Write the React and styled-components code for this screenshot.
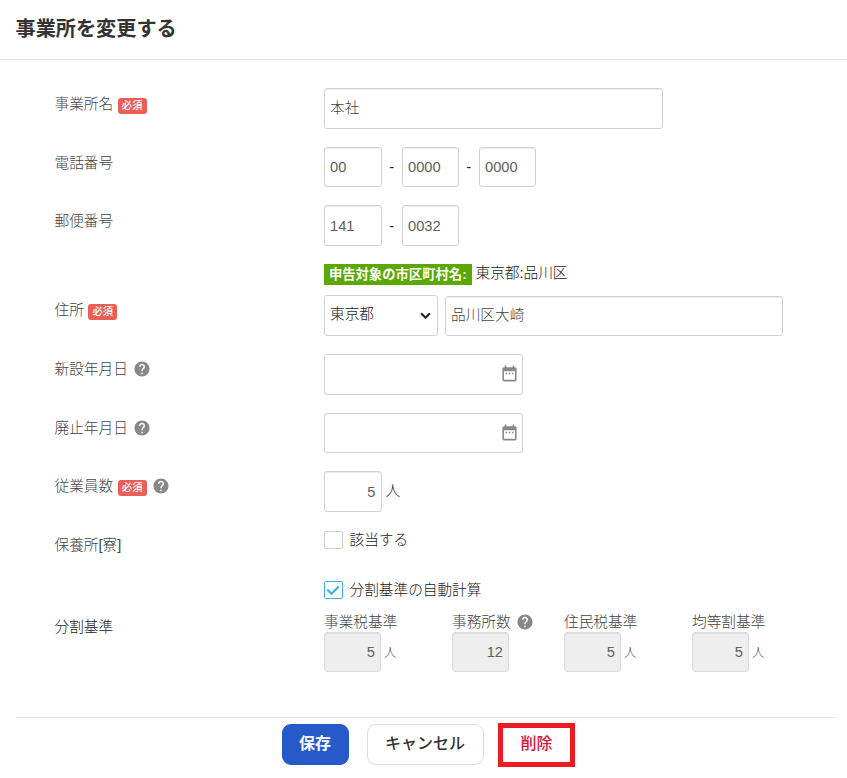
import React from 'react';
import styled, { createGlobalStyle } from 'styled-components';
import { MdHelp, MdDateRange } from 'react-icons/md';

const offices = [
  { label: '事業税基準', value: '5', unit: '人', width: 128 },
  { label: '事務所数', value: '12', help: true, width: 112 },
  { label: '住民税基準', value: '5', unit: '人', width: 128 },
  { label: '均等割基準', value: '5', unit: '人', width: 90 },
];

const Field = ({ label, required, help, height, offset = 0, dark, children }) => (
  <Row $height={height}>
    <Label $offset={offset} $dark={dark}>
      <LabelText>{label}</LabelText>
      {required && <Badge>必須</Badge>}
      {help && <HelpIcon />}
    </Label>
    <Content>{children}</Content>
  </Row>
);

const DateField = ({ height }) => (
  <DateBox>
    <DateInput $width={198.5} $height={height} />
    <CalendarIcon />
  </DateBox>
);

const App = () => {
  return (
    <>
      <GlobalStyle />
      <Page>
        <Header>
          <Title>事業所を変更する</Title>
        </Header>

        <Form>
          <Field label="事業所名" required height={59} offset={1}>
            <Input $width={338.5} $height={41} $text defaultValue="本社" />
          </Field>
          <Field label="電話番号" height={58} offset={1}>
            <Line>
              <Input $width={57.5} defaultValue="00" />
              <Dash>-</Dash>
              <Input $width={56.5} defaultValue="0000" />
              <Dash>-</Dash>
              <Input $width={56.5} defaultValue="0000" />
            </Line>
          </Field>
          <Field label="郵便番号" height={59} offset={1}>
            <Line>
              <Input $width={57.5} $height={41} defaultValue="141" />
              <Dash>-</Dash>
              <Input $width={56.5} $height={41} defaultValue="0032" />
            </Line>
          </Field>
          <Field label="住所" required height={90} offset={31}>
            <CityLine>
              <CityTag>申告対象の市区町村名:</CityTag>
              <span>東京都:品川区</span>
            </CityLine>
            <Line>
              <SelectBox>
                <Select defaultValue="東京都">
                  <option>東京都</option>
                </Select>
                <Chevron viewBox="0 0 10 6">
                  <path d="M1 1l4 4 4-4" fill="none" stroke="currentColor" strokeWidth="1.9" />
                </Chevron>
              </SelectBox>
              <Input $width={337.5} $height={40} $text defaultValue="品川区大崎" />
            </Line>
          </Field>
          <Field label="新設年月日" help height={59}>
            <DateField height={41} />
          </Field>
          <Field label="廃止年月日" help height={58}>
            <DateField height={40} />
          </Field>
          <Field label="従業員数" required help height={60}>
            <Line>
              <Input $width={57.5} $height={41} $right defaultValue="5" />
              <Unit $large>人</Unit>
            </Line>
          </Field>
          <Field label="保養所[寮]" height={50} offset={-1}>
            <CheckLabel>
              <CheckBox />
              <CheckText>該当する</CheckText>
            </CheckLabel>
          </Field>
          <Field label="分割基準" height={136} offset={31} dark>
            <CheckLabel>
              <CheckBox $checked>
                <svg width="14" height="12" viewBox="0 0 14 12">
                  <path d="M1.3 5.6l4.2 4.2 7.2-7.4" fill="none" stroke="#41b0ea" strokeWidth="2.2" />
                </svg>
              </CheckBox>
              <CheckText>分割基準の自動計算</CheckText>
            </CheckLabel>
            <Offices>
              {offices.map((item) => (
                <Office key={item.label} $width={item.width}>
                  <Caption>
                    <LabelText>{item.label}</LabelText>
                    {item.help && <HelpIcon />}
                  </Caption>
                  <Line>
                    <Input $width={57} $right disabled defaultValue={item.value} />
                    {item.unit && <Unit>{item.unit}</Unit>}
                  </Line>
                </Office>
              ))}
            </Offices>
          </Field>
        </Form>

        <Footer>
          <SaveButton>保存</SaveButton>
          <CancelButton>キャンセル</CancelButton>
          <DeleteFrame>
            <DeleteButton>削除</DeleteButton>
          </DeleteFrame>
        </Footer>
      </Page>
    </>
  );
};

export default App;

const GlobalStyle = createGlobalStyle`
  * {
    box-sizing: border-box;
  }
  body {
    margin: 0;
    background: #fff;
    overflow: hidden;
  }
  body, input, select, button {
    font-family: "Liberation Sans", "Noto Sans CJK JP", sans-serif;
    font-size: 14.67px;
    font-weight: 300;
  }
`;

const Page = styled.div`
  width: 847px;
  height: 778px;
  color: #222;
`;

const Header = styled.header`
  height: 60px;
  padding: 14px 15.5px 0;
  border-bottom: 1px solid #e6e6e6;
`;

const Title = styled.h1`
  margin: 0;
  font-size: 20.17px;
  line-height: 30px;
  font-weight: 700;
  color: #333;
`;

const Form = styled.div`
  padding: 28px 0 0 54.5px;
`;

const Row = styled.div`
  display: flex;
  height: ${props => props.$height}px;
`;

const Label = styled.div`
  display: flex;
  align-items: center;
  flex: none;
  width: 269.5px;
  height: 30px;
  margin-top: ${props => props.$offset}px;
  color: ${props => (props.$dark ? '#222' : '#444')};
`;

const LabelText = styled.span`
  padding-bottom: 3px;
`;

const Content = styled.div`
  flex: 1;
`;

const Line = styled.div`
  display: flex;
  align-items: center;
`;

const Badge = styled.span`
  width: 29px;
  height: 16px;
  margin: 4px 0 0 4.5px;
  border-radius: 3px;
  background-color: #ec5f57;
  color: #fff;
  font-size: 10.3px;
  line-height: 16px;
  font-weight: 500;
  text-align: center;
`;

const HelpIcon = styled(MdHelp)`
  width: 18px;
  height: 18px;
  margin: 0 0 0 5px;
  color: #888;
`;

const Input = styled.input`
  flex: none;
  display: block;
  width: ${props => props.$width}px;
  height: ${props => props.$height || 40}px;
  padding: 0 5px ${props => (props.$text ? 5 : 0)}px;
  border: 1px solid #d2d2d2;
  border-radius: 3px;
  background: #fff;
  box-shadow: inset 0 1px 1px rgba(0, 0, 0, 0.075);
  color: ${props => (props.$text ? '#444' : '#606060')};
  text-align: ${props => (props.$right ? 'right' : 'left')};
  outline: none;

  &:disabled {
    background: #eee;
    border-color: #dcdcdc;
  }
`;

const Dash = styled.span`
  width: 20.5px;
  text-align: center;
`;

const CityLine = styled.div`
  display: flex;
  height: 31px;
  gap: 4px;
  line-height: 19px;
`;

const CityTag = styled.span`
  width: 147.5px;
  height: 21px;
  background-color: #5ba800;
  color: #fff;
  font-size: 13.33px;
  line-height: 21px;
  font-weight: 700;
  text-align: center;
`;

const SelectBox = styled.div`
  position: relative;
  margin-right: 7.5px;
`;

const Select = styled.select`
  display: block;
  width: 113.5px;
  height: 41px;
  padding: 0 5px 3px;
  border: 1px solid #d2d2d2;
  border-radius: 3px;
  background: #fff;
  color: #222;
  appearance: none;
`;

const Chevron = styled.svg`
  position: absolute;
  top: 17px;
  right: 7px;
  width: 11px;
  height: 7px;
  color: #222;
`;

const DateBox = styled.div`
  position: relative;
  width: 198.5px;
`;

const DateInput = styled(Input)`
  box-shadow: none;
`;

const CalendarIcon = styled(MdDateRange)`
  position: absolute;
  top: 10px;
  right: 4px;
  width: 19px;
  height: 19px;
  color: #888;
`;

const Unit = styled.span`
  margin-left: ${props => (props.$large ? 4 : 3)}px;
  padding-bottom: ${props => (props.$large ? 4 : 2)}px;
  font-size: ${props => (props.$large ? 14.67 : 12.5)}px;
  color: ${props => (props.$large ? '#222' : '#444')};
`;

const CheckLabel = styled.label`
  display: flex;
  align-items: center;
  gap: 7px;
  height: 18px;
`;

const CheckText = styled.span`
  padding-bottom: 4px;
`;

const CheckBox = styled.span`
  display: flex;
  align-items: center;
  justify-content: center;
  width: 18.5px;
  height: 18px;
  border: 1px solid ${props => (props.$checked ? '#41b0ea' : '#d0d0d0')};
  border-radius: 2px;
`;

const Offices = styled.div`
  display: flex;
  margin-top: 13px;
`;

const Office = styled.div`
  width: ${props => props.$width}px;
`;

const Caption = styled.div`
  display: flex;
  align-items: center;
  height: 20px;
  color: #444;
`;

const Footer = styled.footer`
  display: flex;
  margin: 0 10px 0 16px;
  padding: 6px 0 0 265.5px;
  border-top: 1px solid #e6e6e6;
`;

const Button = styled.button`
  height: 41px;
  padding: 0 0 6px;
  border: 1px solid #ddd;
  border-radius: 9px;
  background: #fff;
  color: #333;
  font-size: 16px;
  font-weight: 500;
  cursor: pointer;
`;

const SaveButton = styled(Button)`
  width: 67px;
  margin-right: 18px;
  background: #265ac8;
  border-color: #265ac8;
  color: #fff;
  font-weight: 700;
`;

const CancelButton = styled(Button)`
  width: 117px;
`;

const DeleteFrame = styled.div`
  width: 77px;
  height: 44px;
  margin: -1px 0 0 14.5px;
  border: 5px solid #ed1c24;
`;

const DeleteButton = styled(Button)`
  display: block;
  width: 67px;
  height: 34px;
  border: none;
  border-radius: 3px;
  color: #dc143c;
`;
